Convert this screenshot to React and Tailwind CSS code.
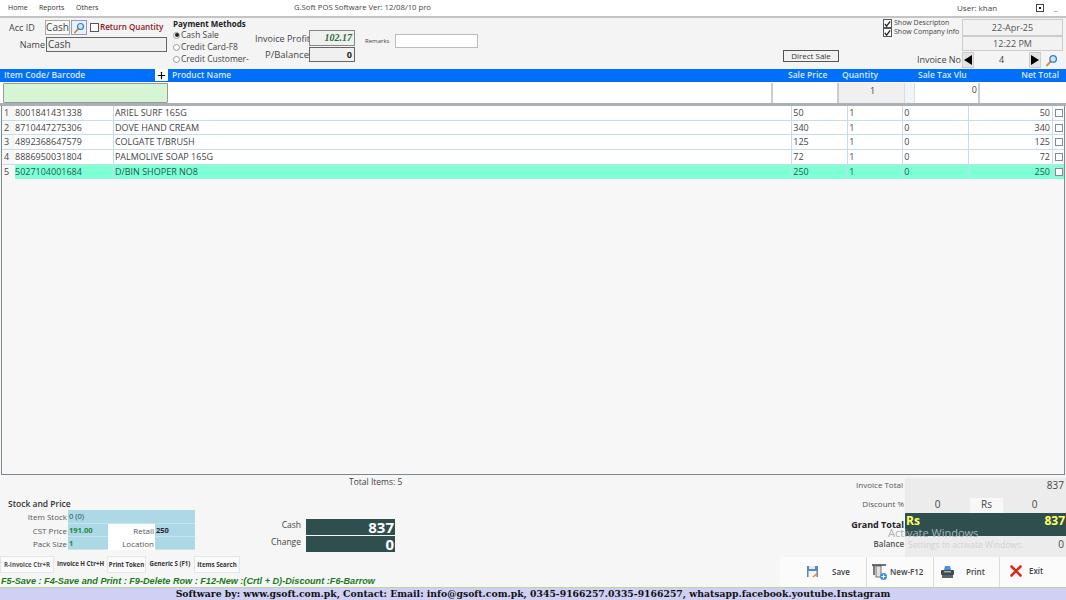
import { Plus } from 'lucide-react'

const ROWS = [
  { code: '8001841431338', name: 'ARIEL SURF 165G', price: 50 },
  { code: '8710447275306', name: 'DOVE HAND CREAM', price: 340 },
  { code: '4892368647579', name: 'COLGATE T/BRUSH', price: 125 },
  { code: '8886950031804', name: 'PALMOLIVE SOAP 165G', price: 72 },
  { code: '5027104001684', name: 'D/BIN SHOPER NO8', price: 250 },
]

function Lens({ size = 15 }) {
  return (
    <svg width={size} height={size} viewBox="0 0 16 16" fill="none">
      <path d="M7.5 8.5 L2.5 14" stroke="#d98a2b" strokeWidth="2.4" strokeLinecap="round" />
      <circle cx="10" cy="6" r="4" fill="#cfe6fa" stroke="#2f7fc8" strokeWidth="1.6" />
    </svg>
  )
}

function Check({ on }) {
  return (
    <span className="w-[9px] h-[9px] border border-[#555] bg-white flex items-center justify-center shrink-0">
      {on && (
        <svg width="8" height="8" viewBox="0 0 8 8" fill="none">
          <path d="M1 4 L3 6.5 L7 1" stroke="#222" strokeWidth="1.5" />
        </svg>
      )}
    </span>
  )
}

function Radio({ label, on }) {
  return (
    <div className="flex items-center h-[12px] text-[8.5px] text-[#444]">
      <span className="w-[7px] h-[7px] rounded-full border border-[#999] bg-white flex items-center justify-center mr-px">
        {on && <span className="w-[4px] h-[4px] rounded-full bg-[#222]" />}
      </span>
      {label}
    </div>
  )
}

function Arrow({ points }) {
  return (
    <span className="w-[12px] h-[16px] bg-[#e4e4e4] border border-[#ccc] flex items-center justify-center">
      <svg width="8" height="10" viewBox="0 0 8 10"><polygon points={points} fill="#000" /></svg>
    </span>
  )
}

function TopPanel() {
  return (
    <div className="flex h-[53px] bg-[#f4f4f4] border-t-2 border-[#c4c4c4]">
      <div className="w-[173px] shrink-0 pt-[2px]">
        <div className="flex items-center h-[15px]">
          <span className="w-[45px] pl-[9px] text-[9px] text-[#444]">Acc ID</span>
          <span className="w-[25px] h-[15px] border border-[#aaa] bg-[#f9f9f9] text-[10px] leading-[13px] text-center text-[#444]">Cash</span>
          <span className="w-[16px] h-[15px] border border-[#99b] bg-[#e8f0fa] flex items-center justify-center ml-px"><Lens size={12} /></span>
          <span className="ml-[3px]"><Check /></span>
          <span className="ml-px text-[8.1px] font-semibold text-[#8a1a2a] whitespace-nowrap">Return Quantity</span>
        </div>
        <div className="flex items-center h-[15px] mt-[2px]">
          <span className="w-[46px] text-right pr-px text-[9px] text-[#444]">Name</span>
          <span className="w-[121px] h-[15px] border border-[#666] bg-[#f0f0f0] text-[10px] leading-[12px] pl-px text-[#444]">Cash</span>
        </div>
      </div>

      <div className="w-[82px] shrink-0 pt-px">
        <div className="text-[8px] font-bold text-[#222] h-[10px] leading-[10px] whitespace-nowrap">Payment Methods</div>
        <Radio label="Cash Sale" on />
        <Radio label="Credit Card-F8" />
        <Radio label="Credit Customer-" />
      </div>

      <div className="w-[110px] shrink-0 pt-[12px]">
        <div className="flex items-center h-[16px]">
          <span className="w-[54px] pt-px text-right text-[9px] text-[#444] whitespace-nowrap">Invoice Profit</span>
          <span className="w-[46px] h-[16px] border border-[#888] bg-[#eef1ee] text-right pr-[2px] font-['Liberation_Serif',serif] italic font-bold text-[10px] leading-[14px] text-[#2d6b3c]">102.17</span>
        </div>
        <div className="flex items-center h-[15px] mt-px">
          <span className="w-[54px] pt-px text-right text-[9.5px] text-[#444]">P/Balance</span>
          <span className="w-[46px] h-[15px] border border-[#666] bg-[#f0f0f0] text-right pr-[2px] font-bold text-[9px] leading-[13px] text-[#222]">0</span>
        </div>
      </div>

      <div className="flex-1 pt-[16px]">
        <div className="flex items-center">
          <span className="w-[30px] text-[6px] text-[#444]">Remarks</span>
          <span className="w-[83px] h-[14px] border border-[#bbb] bg-white" />
        </div>
      </div>

      <div className="w-[100px] shrink-0 pt-[32px]">
        <div className="w-[56px] h-[12px] border border-[#555] bg-[#f2f2f2] text-center text-[8px] leading-[10px] text-[#333]">Direct Sale</div>
      </div>

      <div className="w-[79px] shrink-0 pt-px">
        <div className="flex items-center gap-[2px] h-[9px]"><Check on /><span className="text-[7px] text-[#444] whitespace-nowrap">Show Descripton</span></div>
        <div className="flex items-center gap-[2px] h-[9px]"><Check on /><span className="text-[7px] text-[#444] whitespace-nowrap">Show Company Info</span></div>
      </div>

      <div className="w-[104px] shrink-0 pt-px">
        <div className="w-[101px] h-[17px] border border-[#ccc] bg-[#f2f2f2] text-center text-[9px] leading-[15px] text-[#555]">22-Apr-25</div>
        <div className="w-[101px] h-[15px] border border-[#ccc] bg-[#f2f2f2] text-center text-[9px] leading-[13px] text-[#555]">12:22 PM</div>
        <div className="relative flex items-center h-[16px] mt-px">
          <span className="absolute right-full mr-px text-[9px] text-[#444] whitespace-nowrap">Invoice No</span>
          <Arrow points="8,0 8,10 0,5" />
          <span className="w-[55px] text-center text-[9px] text-[#444]">4</span>
          <Arrow points="0,0 0,10 8,5" />
          <span className="w-[20px] h-[16px] flex items-center justify-center"><Lens size={13} /></span>
        </div>
      </div>
    </div>
  )
}

function GridHeader() {
  return (
    <div className="flex h-[13px] bg-[#0070fb] text-[8.5px] font-semibold leading-[11px] text-[#dbe9ff]">
      <div className="w-[155px] pl-[4px]">Item Code/ Barcode</div>
      <div className="w-[13px] h-[12px] bg-white text-black flex items-center justify-center"><Plus size={11} strokeWidth={2.5} /></div>
      <div className="w-[620px] pl-[4px]">Product Name</div>
      <div className="w-[54px]">Sale Price</div>
      <div className="w-[76px]">Quantity</div>
      <div className="w-[60px]">Sale Tax Vlu</div>
      <div className="w-[81px] text-right">Net Total</div>
    </div>
  )
}

function EntryRow() {
  return (
    <div className="flex h-[24px] bg-white border-b-[3px] border-[#aab0b4] text-[9px] text-[#444] pt-px">
      <div className="ml-[3px] w-[165px] h-[20px] bg-[#d6f5d4] border border-[#999] rounded-[1px]" />
      <div className="w-[605px] h-[20px] border-r-2 border-[#ccc]" />
      <div className="w-[66px] h-[20px] border-r-2 border-[#ccc]" />
      <div className="w-[65px] h-[20px] bg-[#f0f0f0] text-center leading-[16px] pl-[2px]">1</div>
      <div className="w-[11px] h-[20px] bg-[#f0f5fa] border-x border-[#ddd]" />
      <div className="w-[65px] h-[20px] text-right pr-px leading-[14px] border-r-2 border-[#ccc]">0</div>
    </div>
  )
}

function ItemRow({ row, index, active }) {
  const bg = active ? 'bg-[#7fffd4] text-[#1d5c4c]' : 'bg-white text-[#444]'
  return (
    <div className={`flex h-[14.7px] leading-[13px] text-[9px] ${active ? '' : 'border-b border-[#c5dcec]'}`}>
      <div className="w-[13px] bg-[#f7f7f7] pl-[2px] text-[#444]">{index + 1}</div>
      <div className={`w-[99px] border-r border-[#c5dcec] ${bg}`}>{row.code}</div>
      <div className={`w-[679px] pl-px border-r border-[#c5dcec] ${bg}`}>{row.name}</div>
      <div className={`w-[56px] pl-px border-r border-[#c5dcec] ${bg}`}>{row.price}</div>
      <div className={`w-[55px] pl-px border-r border-[#c5dcec] ${bg}`}>1</div>
      <div className={`w-[66px] pl-px border-r border-[#c5dcec] ${bg}`}>0</div>
      <div className={`w-[84px] pr-[2px] text-right border-r border-[#c5dcec] ${bg}`}>{row.price}</div>
      <div className={`w-[11px] flex items-center justify-center ${active ? 'bg-[#7fffd4]' : 'bg-white'}`}>
        <span className="w-[8px] h-[8px] border border-[#888] bg-white" />
      </div>
    </div>
  )
}

function ItemGrid() {
  return (
    <div className="h-[369px] mx-px bg-[#f7f7f7] border border-t-0 border-[#7c8a94]">
      {ROWS.map((row, i) => (
        <ItemRow key={row.code} row={row} index={i} active={i === ROWS.length - 1} />
      ))}
    </div>
  )
}

function StockCell({ className, children }) {
  return <div className={`bg-[#add8e6] border-b border-[#c8e4ee] pl-px text-[7.5px] font-bold leading-[12px] ${className}`}>{children}</div>
}

function StockPanel() {
  return (
    <div className="pl-[8px] pt-[23px]">
      <div className="text-[8.5px] font-semibold leading-[12px] text-[#333]">Stock and Price</div>
      <div className="grid grid-cols-[60px_40px_47px_40px] grid-rows-[13.5px_13.5px_13px] text-[8px] leading-[13px] text-[#555]">
        <div className="text-right pr-px">Item Stock</div>
        <StockCell className="col-span-3 text-[#345] font-normal">0 (0)</StockCell>
        <div className="text-right pr-px">CST Price</div>
        <StockCell className="text-[#1a8a3a]">191.00</StockCell>
        <div className="text-right pr-px bg-white">Retail</div>
        <StockCell className="text-[#223]">250</StockCell>
        <div className="text-right pr-px">Pack Size</div>
        <StockCell className="text-[#1a8a3a]">1</StockCell>
        <div className="text-right pr-px bg-white">Location</div>
        <StockCell />
      </div>
    </div>
  )
}

function Tabs() {
  const tabs = [
    ['R-Invoice Ctr+R', 'w-[54px] border border-[#dfe6ee] bg-[#fbfbfb] text-[#555]'],
    ['Invoice H Ctr+H', 'w-[53px] text-[#333]'],
    ['Print Token', 'w-[39px] border border-[#dfe6ee] bg-[#fbfbfb] text-[#333]'],
    ['Generic S (F1)', 'w-[48px] text-[#333]'],
    ['Items Search', 'w-[46px] border border-[#dfe6ee] bg-[#fbfbfb] text-[#333]'],
  ]
  return (
    <div className="flex items-center h-[18px] text-[6.1px] font-bold">
      {tabs.map(([label, cls]) => (
        <div key={label} className={`h-[17px] leading-[15px] text-center whitespace-nowrap ${cls}`}>{label}</div>
      ))}
    </div>
  )
}

function CashPanel() {
  return (
    <div className="w-[510px] shrink-0">
      <div className="pl-[79px] pt-px text-[8.5px] leading-[12px] text-[#444]">Total Items: 5</div>
      <div className="flex flex-col gap-px mt-[31px]">
        {[['Cash', '837'], ['Change', '0']].map(([label, value]) => (
          <div key={label} className="flex items-center h-[16px]">
            <span className="w-[31px] -mt-[3px] text-right text-[8.5px] text-[#444] whitespace-nowrap">{label}</span>
            <span className="ml-[5px] w-[89px] h-[16px] bg-[#2f4f4f] text-right pr-px text-[15px] font-bold leading-[16px] text-white">{value}</span>
          </div>
        ))}
      </div>
    </div>
  )
}

function TotalsPanel() {
  return (
    <div className="h-[82px] pt-[3px] text-[8px] text-[#555]">
      <div className="flex items-center h-[20px]">
        <span className="w-[125px] -mt-[6px] text-right pr-[2px]">Invoice Total</span>
        <span className="flex-1 h-[20px] bg-[#ececec] text-right pr-[2px] text-[10px] leading-[14px] text-[#444]">837</span>
      </div>
      <div className="flex items-center h-[15px]">
        <span className="w-[125px] -mt-[3px] text-right pr-px">Discount %</span>
        <span className="w-[65px] h-[15px] bg-[#ececec] text-center text-[10px] leading-[13px] text-[#444]">0</span>
        <span className="w-[33px] h-[15px] bg-[#f8f8f8] text-center text-[10px] leading-[13px] text-[#444]">Rs</span>
        <span className="flex-1 h-[15px] bg-[#ececec] text-center text-[10px] leading-[13px] text-[#444]">0</span>
      </div>
      <div className="flex items-center h-[23px]">
        <span className="w-[125px] text-right pr-px text-[9px] font-bold text-[#222]">Grand Total</span>
        <span className="flex-1 h-[23px] bg-[#2f4f4f] flex justify-between px-px text-[12px] font-bold leading-[16px] text-[#ffff66]">
          <span>Rs</span><span>837</span>
        </span>
      </div>
      <div className="flex items-center h-[21px]">
        <span className="w-[125px] -mt-[6px] text-right pr-px font-semibold">Balance</span>
        <span className="flex-1 h-[21px] bg-[#ececec] text-right pr-[2px] text-[10px] leading-[17px] text-[#444]">0</span>
      </div>
    </div>
  )
}

function SaveIcon() {
  return (
    <svg width="14" height="14" viewBox="0 0 14 14">
      <rect x="1" y="1" width="11" height="11" fill="#5b86c4" />
      <rect x="3" y="1" width="6" height="3" fill="#e6e9ee" />
      <rect x="2.5" y="6" width="8" height="6" fill="#f6f6f6" />
      <path d="M7 12 L12 8" stroke="#e08a2a" strokeWidth="1.6" />
    </svg>
  )
}

function NewIcon() {
  return (
    <svg width="18" height="18" viewBox="0 0 18 18">
      <path d="M1 2 H15 M3 2 V12 M9 2 V14" stroke="#444" strokeWidth="1.4" fill="none" />
      <rect x="5" y="3" width="5" height="11" fill="#dfe3e8" stroke="#555" strokeWidth="0.8" />
      <circle cx="12.5" cy="13.5" r="3.5" fill="#3f8fe0" />
      <path d="M12.5 11.5 V15.5 M10.5 13.5 H14.5" stroke="#fff" strokeWidth="1" />
    </svg>
  )
}

function PrintIcon() {
  return (
    <svg width="15" height="14" viewBox="0 0 15 14">
      <path d="M4 5 L5 1 H10 L11 5 Z" fill="#4a90d9" />
      <rect x="1" y="5" width="13" height="5" rx="1" fill="#3f4a55" />
      <rect x="2" y="10" width="11" height="3" fill="#59636e" />
      <rect x="4" y="6" width="7" height="1.4" fill="#9fb4c8" />
    </svg>
  )
}

function ExitIcon() {
  return (
    <svg width="12" height="12" viewBox="0 0 12 12">
      <path d="M1.5 1.5 L10.5 10.5 M10.5 1.5 L1.5 10.5" stroke="#d92b20" strokeWidth="2.6" strokeLinecap="round" />
    </svg>
  )
}

export default function App() {
  return (
    <div className="relative w-[1066px] h-[600px] overflow-hidden bg-[#f6f6f6] font-['Open_Sans','Noto_Sans',sans-serif]">
      <div className="flex items-center h-[16px] bg-white text-[7px] text-[#333]">
        <span className="ml-[8px] w-[19px]">Home</span>
        <span className="ml-[12px] w-[25px]">Reports</span>
        <span className="ml-[12px] w-[21px]">Others</span>
        <span className="ml-[197px] w-[137px] text-[7.7px] text-[#444] whitespace-nowrap">G.Soft POS Software Ver: 12/08/10 pro</span>
        <span className="ml-[526px] w-[39px] text-[8px] text-[#444] whitespace-nowrap">User: khan</span>
        <span className="ml-[40px] w-[8px] h-[8px] border border-[#444] flex items-center justify-center"><span className="w-[2px] h-[2px] bg-[#222]" /></span>
        <span className="ml-[10px] text-[8px] text-[#555]">_</span>
      </div>
      <TopPanel />
      <GridHeader />
      <EntryRow />
      <ItemGrid />

      <div className="flex h-[112px]">
        <div className="w-[270px] shrink-0 flex flex-col">
          <div className="h-[80px]"><StockPanel /></div>
          <Tabs />
          <div className="h-[14px] pl-px pt-px font-['Liberation_Sans',sans-serif] italic font-bold text-[9.15px] leading-[14px] text-[#1a7a1a] whitespace-nowrap">
            F5-Save : F4-Save and Print : F9-Delete Row : F12-New :(Crtl + D)-Discount :F6-Barrow
          </div>
        </div>
        <CashPanel />
        <div className="flex-1 flex flex-col">
          <TotalsPanel />
          <div className="flex h-[30px] bg-[#fbfbfb] text-[8px] font-semibold text-[#444]">
            <div className="w-[87px] border-r border-[#ddd] flex items-center pl-[26px] gap-[12px]"><SaveIcon />Save</div>
            <div className="w-[67px] border-r border-[#ddd] flex items-center pl-[4px] gap-px"><NewIcon />New-F12</div>
            <div className="w-[66px] border-r border-[#ddd] flex items-center pl-[6px] gap-[11px]"><PrintIcon />Print</div>
            <div className="flex-1 flex items-center pl-[10px] gap-[7px] -mt-[3px]"><ExitIcon />Exit</div>
          </div>
        </div>
      </div>

      <div className="h-[13px] bg-[#d0d0f5] border-t border-[#b8d8a0] text-center font-['DejaVu_Serif',serif] font-bold text-[9.28px] leading-[12px] text-[#111]">
        Software by: www.gsoft.com.pk, Contact: Email: info@gsoft.com.pk, 0345-9166257.0335-9166257, whatsapp.facebook.youtube.Instagram
      </div>

      <div className="absolute left-[888px] top-[526px] text-[11px] leading-[14px] text-[#a9b3b3] whitespace-nowrap">Activate Windows</div>
      <div className="absolute left-[908px] top-[540px] text-[8.5px] leading-[10px] text-[#d2d2d2] whitespace-nowrap">Settings to activate Windows.</div>
    </div>
  )
}
